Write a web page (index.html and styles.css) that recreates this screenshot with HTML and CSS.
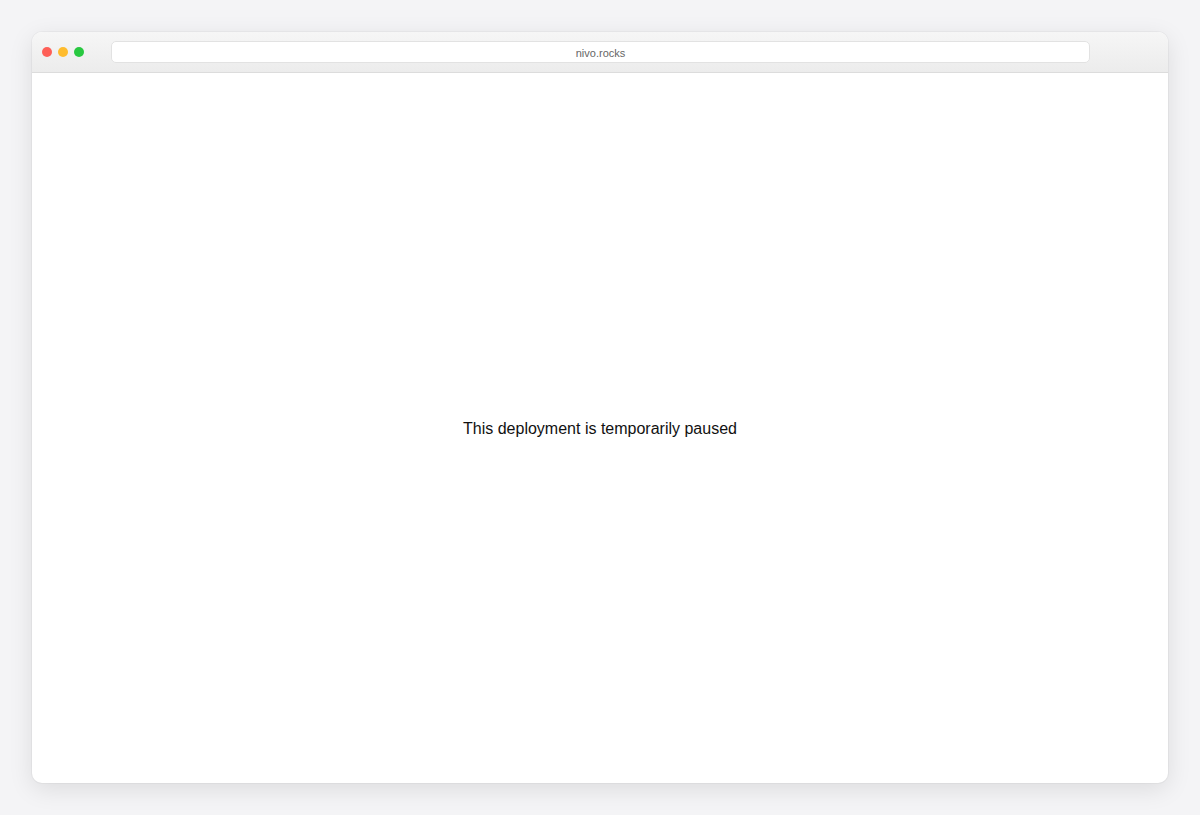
FILE: index.html
```html
<!DOCTYPE html>
<html lang="en">
<head>
  <meta charset="UTF-8">
  <title>nivo.rocks</title>
  <meta name="viewport" content="width=device-width, initial-scale=1.0">
  <link rel="stylesheet" href="styles.css">
</head>
<body>
  <div class="fenetre">
    <div class="barre">
      <div class="points">
        <span class="point rouge"></span>
        <span class="point jaune"></span>
        <span class="point vert"></span>
      </div>
      <div class="adresse">nivo.rocks</div>
    </div>
    <div class="contenu">
      <p class="message">This deployment is temporarily paused</p>
    </div>
  </div>
</body>
</html>
```

FILE: styles.css
```css
html, body {
  height: 100%;
}
body {
  margin: 0;
  padding: 32px;
  box-sizing: border-box;
  background: #f4f4f6;
  font-family: "Liberation Sans", Arial, sans-serif;
}
.fenetre {
  height: 751px;
  display: flex;
  flex-direction: column;
  background: #fff;
  border-radius: 10px;
  overflow: hidden;
  box-shadow: 0 6px 24px rgba(0, 0, 0, 0.1), 0 0 0 1px rgba(0, 0, 0, 0.03);
}
.barre {
  height: 40px;
  display: flex;
  align-items: center;
  padding: 0 78px 0 10px;
  background: linear-gradient(#f6f6f6, #ececec);
  border-bottom: 1px solid #dcdcdc;
}
.points {
  display: flex;
  gap: 6px;
  width: 69px;
}
.point {
  width: 10px;
  height: 10px;
  border-radius: 50%;
}
.rouge { background: #fe5f57; }
.jaune { background: #febc2e; }
.vert { background: #28c840; }
.adresse {
  flex: 1;
  height: 22px;
  line-height: 22px;
  background: #fff;
  border: 1px solid #e2e2e2;
  border-radius: 5px;
  box-sizing: border-box;
  text-align: center;
  font-size: 11px;
  color: #666;
}
.contenu {
  flex: 1;
  display: flex;
  align-items: center;
  justify-content: center;
}
.message {
  margin: 0 0 -2px;
  font-size: 16px;
  color: #111;
}
```
